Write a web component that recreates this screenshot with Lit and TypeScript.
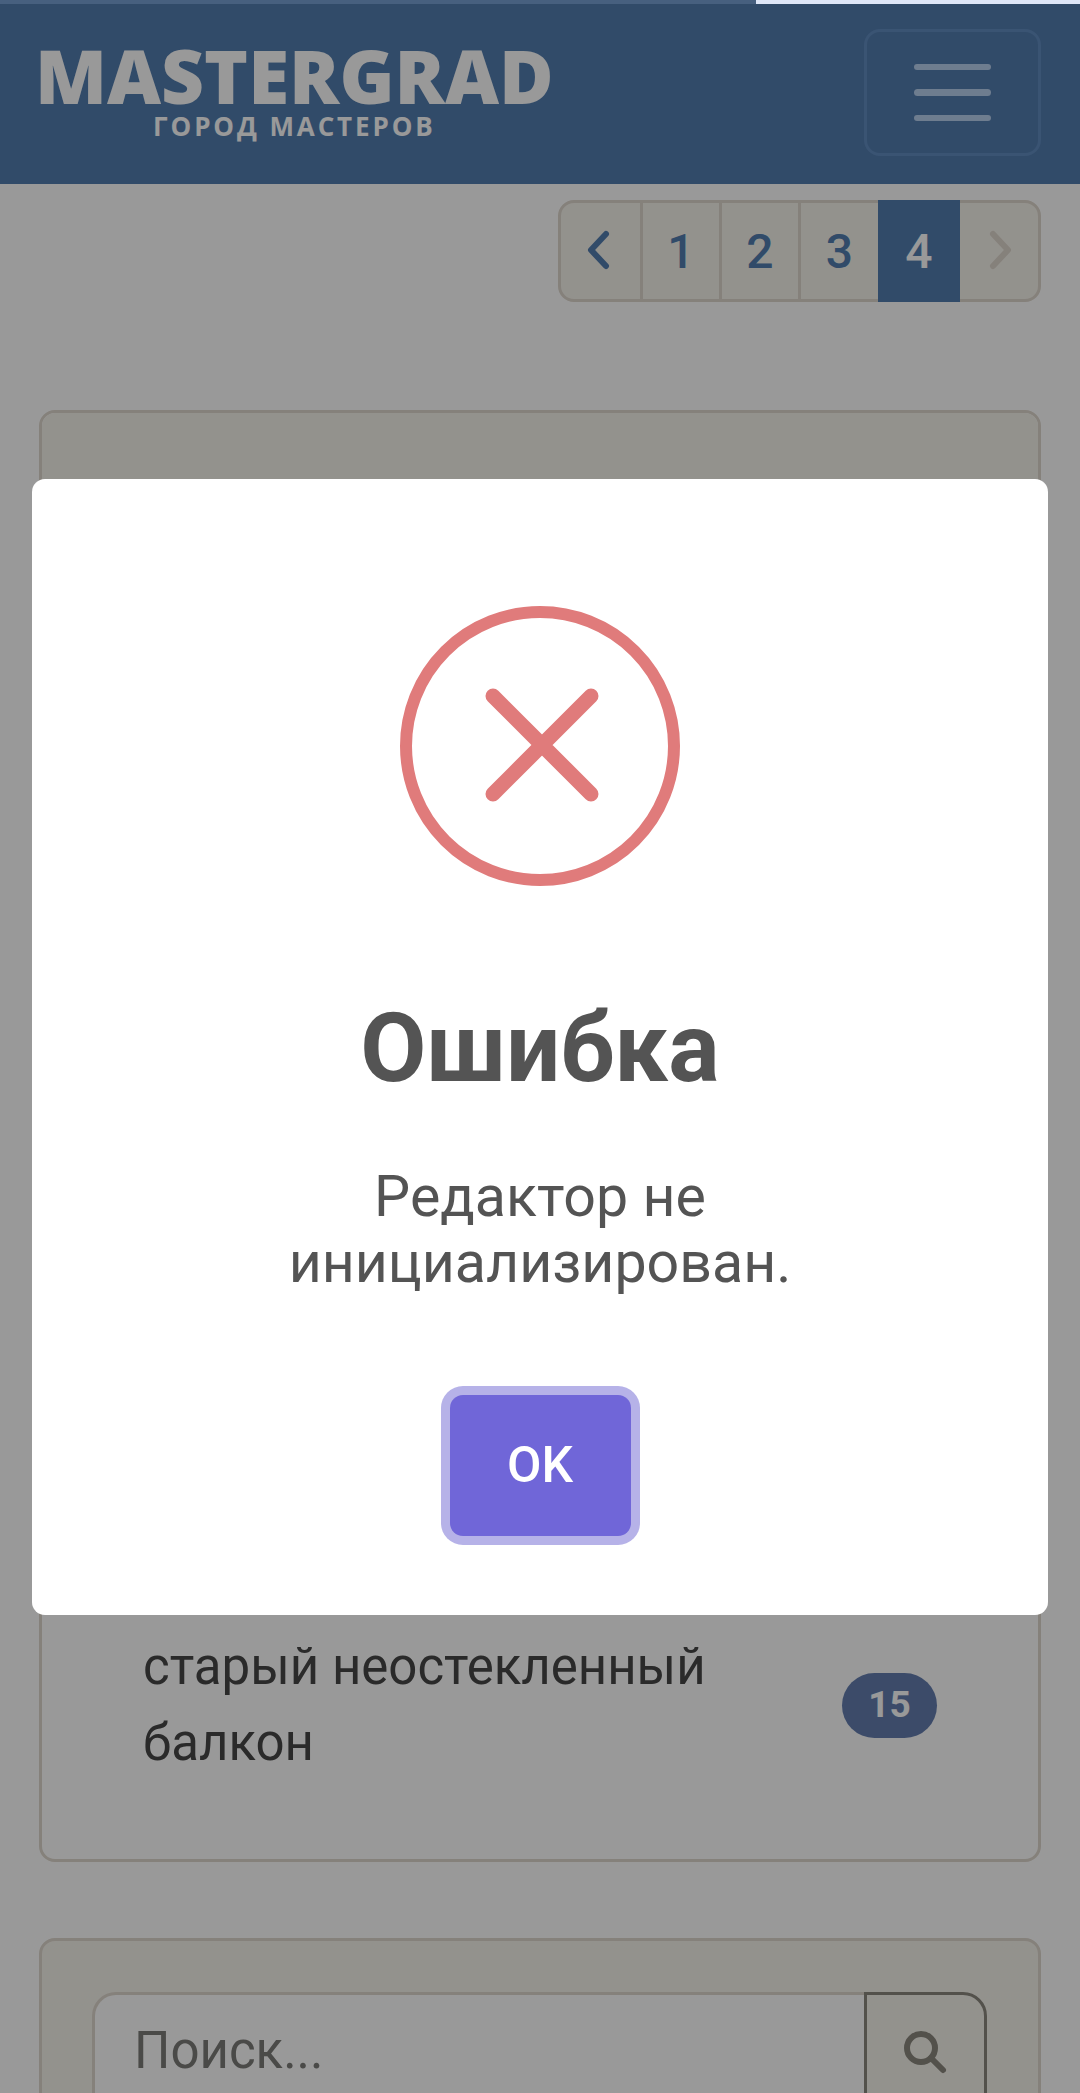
import { LitElement, html, css } from "lit";
import { customElement } from "lit/decorators.js";

@customElement("app-root")
export class AppRoot extends LitElement {
  static styles = css`
    :host { display: block; height: 100vh; overflow: hidden; position: relative; background: #fff; font-family: Roboto, "Liberation Sans", sans-serif; }
    * { box-sizing: border-box; }
    .progress { height: 4px; background: #dfe7f8; display: flex; position: relative; z-index: 2; }
    .progress i { display: block; width: 756px; background: #47607f; }
    .nav { height: 180px; background: #537daf; display: flex; align-items: flex-start; justify-content: space-between; padding: 25px 39px 0 35px; }
    .brand { display: flex; flex-direction: column; align-items: center; font-family: "Open Sans", sans-serif; color: #fff; padding-top: 10px; }
    .brand b { font-size: 74.5px; line-height: 72px; font-weight: 800; }
    .brand span { font-size: 26px; line-height: 30px; font-weight: 700; letter-spacing: 2.9px; }
    .burger { width: 177px; height: 127px; border: 3px solid #618cc0; border-radius: 16px; display: flex; flex-direction: column; justify-content: center; align-items: center; gap: 19px; }
    .burger i { display: block; width: 77px; height: 6.5px; border-radius: 4px; background: #b8d0ef; }
    .pager-row { display: flex; justify-content: flex-end; padding: 16px 39px 0 0; }
    .pager { display: flex; height: 102px; background: #f6f3ec; border: 3px solid #ded7cd; border-radius: 16px; }
    .pager div { display: flex; align-items: center; justify-content: center; font-size: 48px; font-weight: 500; color: #537daf; border-right: 3px solid #ded7cd; }
    .pager .p0 { width: 82px; padding: 0 6px 3px 0; }
    .pager .p1, .pager .p2 { width: 79px; }
    .pager .p3 { width: 77px; border-right: none; }
    .pager .on { width: 82px; background: #537daf; color: #fff; border: none; margin: -3px 0; }
    .pager .nx { width: 78px; border-right: none; padding: 0 0 3px 4px; }
    .card { margin: 0 39px; border: 3px solid #ded7cd; border-radius: 16px; overflow: hidden; }
    .card1 { margin-top: 108px; height: 1452px; display: flex; flex-direction: column; }
    .card-head { height: 200px; background: #f6f3ec; border-bottom: 3px solid #ded7cd; }
    .spacer { flex: 1; }
    .item { display: flex; align-items: center; justify-content: space-between; padding: 0 101px 0 101px; margin-bottom: 78px; font-size: 51px; line-height: 76px; color: #474747; }
    .item p { margin: 0; width: 600px; }
    .badge { width: 95px; height: 65px; border-radius: 33px; background: #647eb0; color: #fff; font-size: 37px; font-weight: 700; display: flex; align-items: center; justify-content: center; }
    .card2 { margin-top: 76px; height: 300px; background: #f6f3ec; padding: 51px 51px 0 50px; }
    .search { display: flex; height: 200px; }
    .input { flex: 1; height: 100%; background: #fff; border: 3px solid #ded7cd; border-right: none; border-radius: 24px 0 0 24px; font-size: 51px; color: #7c7c78; padding: 26px 39px; line-height: 60px; }
    .sbtn { width: 123px; height: 100%; border: 3px solid #8a887e; border-radius: 0 24px 24px 0; display: flex; justify-content: center; padding-top: 36px; }
    .sbtn svg { width: 44px; height: 44px; }
    .overlay { position: fixed; inset: 0; background: rgba(0,0,0,.4); display: flex; align-items: center; justify-content: center; }
    .modal { width: 1016px; height: 1136px; background: #fff; border-radius: 13px; display: flex; flex-direction: column; align-items: center; padding-top: 127px; color: #545454; text-align: center; }
    .icon { width: 280px; height: 280px; display: block; }
    h2 { margin: 107px 0 0; font-size: 96px; line-height: 110px; font-weight: 700; }
    .msg { margin: 61px 0 0; font-size: 57.3px; line-height: 66px; width: 600px; }
    .ok { margin-top: 99px; width: 181px; height: 141px; background: #7066d8; border-radius: 13px; color: #fff; font-size: 50px; font-weight: 500; display: flex; align-items: center; justify-content: center; box-shadow: 0 0 0 9px #b6b2e8; }
  `;

  render() {
    return html`
      <div class="progress"><i></i></div>
      <div class="nav">
        <div class="brand"><b>MASTERGRAD</b><span>ГОРОД МАСТЕРОВ</span></div>
        <div class="burger"><i></i><i></i><i></i></div>
      </div>
      <div class="pager-row">
        <div class="pager">
          <div class="p0"><svg width="24" height="40" viewBox="0 0 24 40"><path d="M20 4 5 20l15 16" fill="none" stroke="#537daf" stroke-width="6" stroke-linecap="round" stroke-linejoin="round"/></svg></div>
          <div class="p1">1</div>
          <div class="p2">2</div>
          <div class="p3">3</div>
          <div class="on">4</div>
          <div class="nx"><svg width="24" height="40" viewBox="0 0 24 40"><path d="M4 4l15 16L4 36" fill="none" stroke="#ded7cd" stroke-width="6" stroke-linecap="round" stroke-linejoin="round"/></svg></div>
        </div>
      </div>
      <div class="card card1">
        <div class="card-head"></div>
        <div class="spacer"></div>
        <div class="item"><p>старый неостекленный балкон</p><span class="badge">15</span></div>
      </div>
      <div class="card card2">
        <div class="search">
          <div class="input">Поиск...</div>
          <div class="sbtn"><svg viewBox="0 0 44 44"><circle cx="17" cy="17" r="14" fill="none" stroke="#8a887e" stroke-width="6"/><path d="M27 27l12 12" stroke="#8a887e" stroke-width="6" stroke-linecap="round"/></svg></div>
        </div>
      </div>
      <div class="overlay">
        <div class="modal">
          <svg class="icon" viewBox="0 0 280 280"><circle cx="140" cy="140" r="134" fill="none" stroke="#e07b7b" stroke-width="12"/><path d="M93 90l98 98M191 90l-98 98" stroke="#e07b7b" stroke-width="15" stroke-linecap="round"/></svg>
          <h2>Ошибка</h2>
          <p class="msg">Редактор не инициализирован.</p>
          <div class="ok">OK</div>
        </div>
      </div>
    `;
  }
}
